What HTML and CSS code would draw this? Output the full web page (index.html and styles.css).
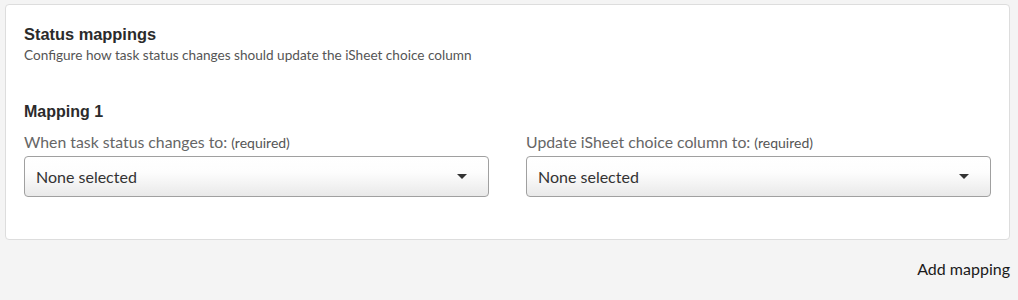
FILE: index.html
```html
<!DOCTYPE html>
<html lang="en">
<head>
<meta charset="UTF-8" />
<title>Status mappings</title>
<link rel="stylesheet" href="styles.css">
</head>
<body>
<main>
  <section class="card">
    <header class="card-head">
      <h2>Status mappings</h2>
      <p>Configure how task status changes should update the iSheet choice column</p>
    </header>

    <div class="mapping">
      <h3>Mapping 1</h3>
      <div class="mapping-fields">
        <div class="field">
          <label>When task status changes to: <small>(required)</small></label>
          <button class="select" type="button">
            <span>None selected</span>
            <span class="caret"></span>
          </button>
        </div>
        <div class="field">
          <label>Update iSheet choice column to: <small>(required)</small></label>
          <button class="select" type="button">
            <span>None selected</span>
            <span class="caret"></span>
          </button>
        </div>
      </div>
    </div>
  </section>

  <div class="actions">
    <button class="add-btn" type="button">Add mapping</button>
  </div>
</main>
</body>
</html>
```

FILE: styles.css
```css
*, *::before, *::after {
  box-sizing: border-box;
}
body {
  margin: 0;
  background: #f4f4f4;
  color: #333;
  font-family: Lato, 'Open Sans', sans-serif;
}
main {
  padding: 4px 8px 0 5px;
}
/* Card */
.card {
  background: #fff;
  border: 1px solid #ddd;
  border-radius: 4px;
  padding: 19px 18px 42px 18px;
}
.card-head h2 {
  margin: 0;
  font-family: 'Liberation Sans', Arial, sans-serif;
  font-size: 16.4px;
  font-weight: 700;
  color: #2b2b2b;
  line-height: 20px;
}
.card-head p {
  margin: 2px 0 0;
  font-size: 13.6px;
  color: #555;
  line-height: 18px;
}
/* Mapping */
.mapping {
  margin-top: 38px;
}
.mapping h3 {
  margin: 0;
  font-family: 'Liberation Sans', Arial, sans-serif;
  font-size: 16px;
  font-weight: 700;
  color: #2b2b2b;
  line-height: 20px;
}
.mapping-fields {
  display: grid;
  grid-template-columns: 1fr 1fr;
  gap: 37px;
  margin-top: 10px;
}
.field label {
  display: block;
  font-size: 15.8px;
  color: #666;
  line-height: 20px;
  margin-bottom: 3px;
}
.field label small {
  font-size: 14px;
  color: #555;
}
.select {
  display: flex;
  align-items: center;
  justify-content: space-between;
  width: 100%;
  height: 41px;
  padding: 0 21px 0 11px;
  border: 1px solid #a0a0a0;
  border-radius: 4px;
  background: linear-gradient(#fff 0%, #fdfdfd 40%, #e9e9e9 100%);
  font-family: inherit;
  font-size: 16px;
  color: #333;
  text-align: left;
  cursor: pointer;
}
.caret {
  width: 0;
  height: 0;
  border-left: 5.5px solid transparent;
  border-right: 5.5px solid transparent;
  border-top: 5px solid #333;
}
/* Footer action */
.actions {
  display: flex;
  justify-content: flex-end;
  padding-top: 19px;
}
.add-btn {
  background: none;
  border: none;
  padding: 0;
  font-family: inherit;
  font-size: 16px;
  color: #1a1a1a;
  cursor: pointer;
}
```
